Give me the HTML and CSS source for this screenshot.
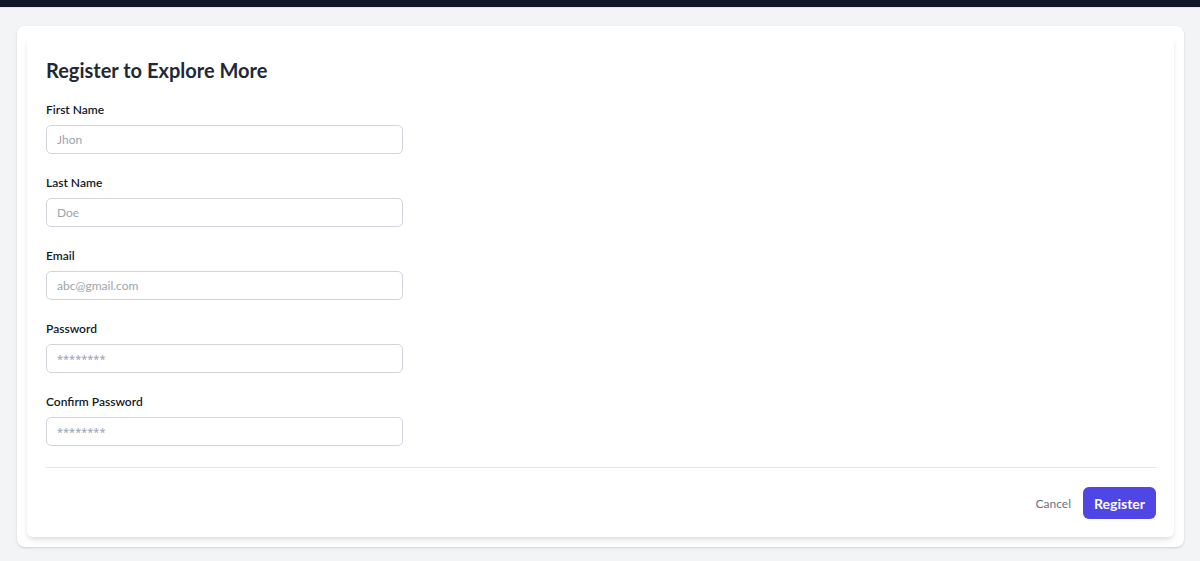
FILE: index.html
```html
<!DOCTYPE html>
<html lang="en">
<head>
<meta charset="utf-8">
<title>Register</title>
<link rel="stylesheet" href="styles.css">
</head>
<body>
<nav class="topbar"></nav>
<main class="page">
  <div class="outer">
    <form class="card">
      <h1 class="title">Register to Explore More</h1>
      <div class="field">
        <label class="label" for="fn">First Name</label>
        <input class="input" id="fn" type="text" placeholder="Jhon">
      </div>
      <div class="field">
        <label class="label" for="ln">Last Name</label>
        <input class="input" id="ln" type="text" placeholder="Doe">
      </div>
      <div class="field">
        <label class="label" for="em">Email</label>
        <input class="input" id="em" type="email" placeholder="abc@gmail.com">
      </div>
      <div class="field">
        <label class="label" for="pw">Password</label>
        <input class="input input-secret" id="pw" type="password" placeholder="********">
      </div>
      <div class="field">
        <label class="label" for="cpw">Confirm Password</label>
        <input class="input input-secret" id="cpw" type="password" placeholder="********">
      </div>
      <div class="actions">
        <button type="button" class="btn-cancel">Cancel</button>
        <button type="button" class="btn-primary">Register</button>
      </div>
    </form>
  </div>
</main>
</body>
</html>
```
FILE: styles.css
```css
* { box-sizing: border-box; }
html, body { margin: 0; padding: 0; }
body {
  background: #f3f4f6;
  font-family: "Lato", "Noto Sans", sans-serif;
  color: #111827;
  height: 561px;
  overflow: hidden;
}
.topbar {
  height: 8px;
  background: #111827;
  border-bottom: 1px solid #e5e7eb;
}
.page {
  padding: 18px 16px 0 17px;
}
.outer {
  background: #fff;
  border-radius: 8px;
  padding: 10px;
  box-shadow: 0 1px 3px rgba(0,0,0,0.1), 0 1px 2px rgba(0,0,0,0.06);
}
.card {
  background: #fff;
  border-radius: 6px;
  padding: 20px 18px 18px 19px;
  box-shadow: 0 4px 6px -1px rgba(0,0,0,0.1), 0 2px 4px -1px rgba(0,0,0,0.06);
}
.title {
  margin: 0 0 18px;
  font-size: 20px;
  line-height: 28px;
  font-weight: 700;
  color: #1f2937;
}
.field {
  display: flex;
  flex-direction: column;
  gap: 7px;
  margin-bottom: 21px;
}
.field:last-of-type { margin-bottom: 0; }
.label {
  font-size: 12px;
  line-height: 16px;
  font-weight: 600;
  color: #111827;
}
.input {
  width: 357px;
  height: 29px;
  border: 1px solid #d1d5db;
  border-radius: 5px;
  padding: 0 10px;
  font-family: inherit;
  font-size: 12px;
  color: #111827;
  background: #fff;
  outline: none;
}
.input::placeholder { color: #9ca3af; }
.input-secret { font-family: "Noto Sans", sans-serif; font-size: 11px; }
.actions {
  margin-top: 18px;
  border-top: 1px solid #e5e7eb;
  padding-top: 19px;
  display: flex;
  justify-content: flex-end;
  align-items: center;
  gap: 12px;
}
.btn-cancel {
  background: none;
  border: none;
  font-family: inherit;
  font-size: 12px;
  color: #6b7280;
  padding: 0;
  cursor: pointer;
}
.btn-primary {
  background: #4f46e5;
  color: #fff;
  border: none;
  border-radius: 6px;
  height: 32px;
  width: 73px;
  font-family: inherit;
  font-size: 14px;
  font-weight: 700;
  cursor: pointer;
}
```
